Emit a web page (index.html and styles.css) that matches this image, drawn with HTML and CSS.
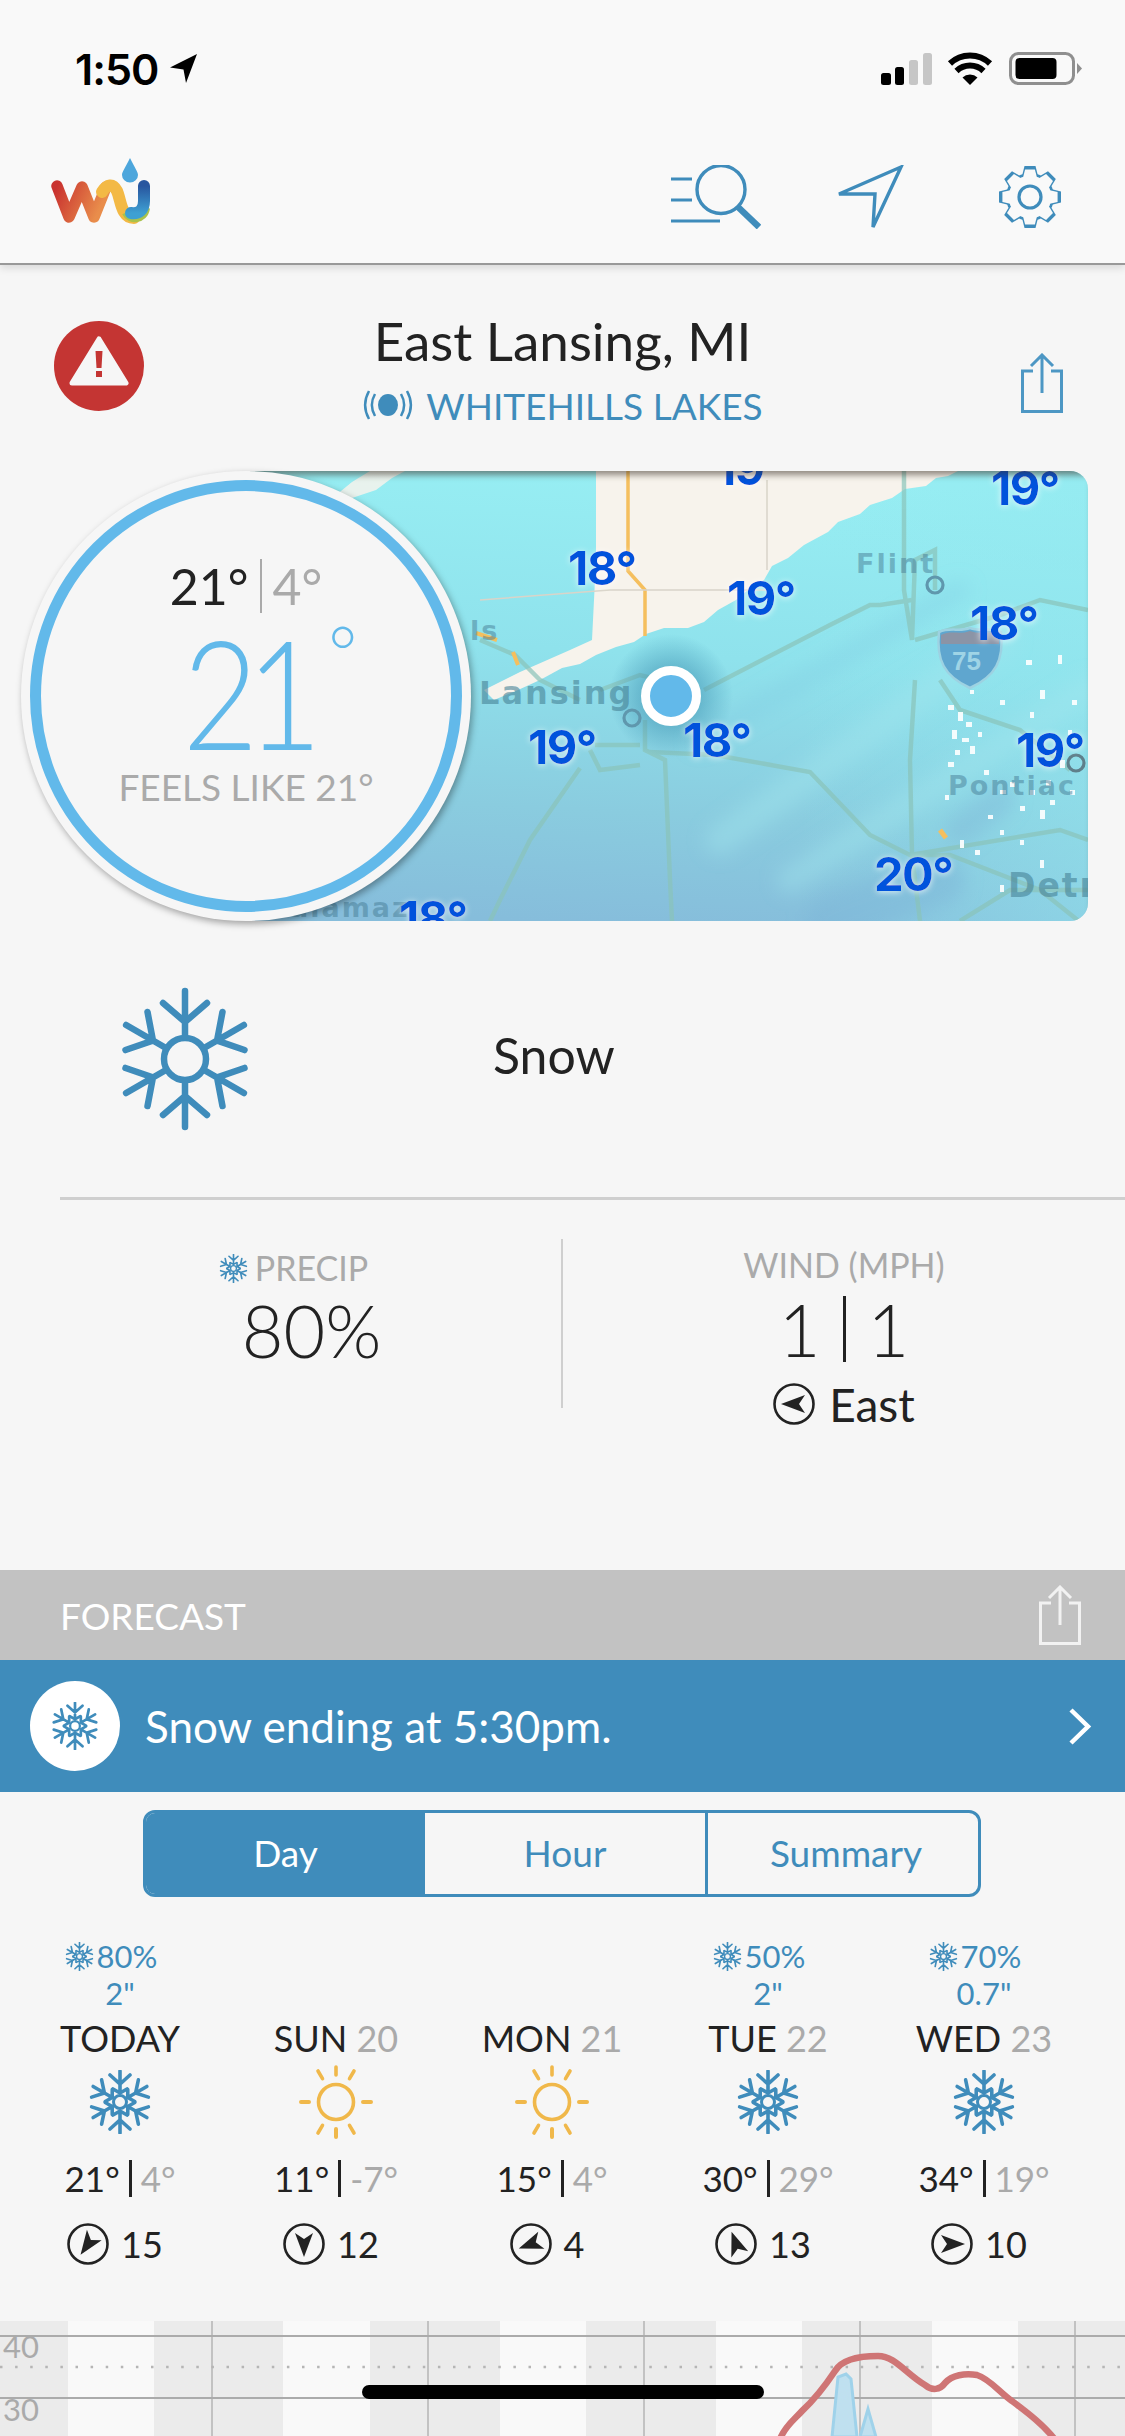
FILE: index.html
```html
<!DOCTYPE html>
<html lang="en">
<head>
<meta charset="utf-8">
<title>Weather Underground</title>
<link rel="stylesheet" href="styles.css">
</head>
<body>
<svg class="defs" width="0" height="0" aria-hidden="true">
  <defs>
    <g id="arm"><path d="M0 -9V-31M-10 -27L0 -18L10 -27M-7 -13L0 -9L7 -13" fill="none" stroke-linecap="round"/></g>
    <symbol id="flake" viewBox="-32 -32 64 64">
      <g stroke="currentColor" stroke-width="3.6" fill="none">
        <circle r="6.5" stroke-width="3"/>
        <use href="#arm"/><use href="#arm" transform="rotate(60)"/><use href="#arm" transform="rotate(120)"/>
        <use href="#arm" transform="rotate(180)"/><use href="#arm" transform="rotate(240)"/><use href="#arm" transform="rotate(300)"/>
      </g>
    </symbol>
    <symbol id="sun" viewBox="-38 -38 76 76">
      <g fill="none" stroke="#f0b84a" stroke-width="3.6" stroke-linecap="round">
        <circle r="17.5"/>
        <path id="ray" d="M0 -27V-35"/>
        <path d="M0 27V35M27 0H35M-27 0H-35" stroke-width="4"/>
        <path d="M13.5 -23.4L18 -31M-13.5 -23.4L-18 -31M13.5 23.4L18 31M-13.5 23.4L-18 31"/>
      </g>
    </symbol>
    <symbol id="wind" viewBox="-21 -21 42 42">
      <circle r="19.5" fill="none" stroke="#222" stroke-width="2.6"/>
    </symbol>
    <path id="kite" d="M13 0L-11 -9L-5 0L-11 9Z" fill="#222"/>
    <g id="tooth"><path d="M-8 -21L-5.5 -31H5.5L8 -21Z"/></g>
    <g id="gearshape">
      <circle r="24"/>
      <use href="#tooth"/><use href="#tooth" transform="rotate(45)"/><use href="#tooth" transform="rotate(90)"/><use href="#tooth" transform="rotate(135)"/>
      <use href="#tooth" transform="rotate(180)"/><use href="#tooth" transform="rotate(225)"/><use href="#tooth" transform="rotate(270)"/><use href="#tooth" transform="rotate(315)"/>
    </g>
    <linearGradient id="wGrad" x1="0" x2="1" y1="0" y2="0.3"><stop offset="0" stop-color="#c9322f"/><stop offset="1" stop-color="#e98d4b"/></linearGradient>
    <linearGradient id="uGrad" x1="0" x2="0" y1="0" y2="1"><stop offset="0" stop-color="#28569f"/><stop offset="1" stop-color="#3ea0d3"/></linearGradient>
    <linearGradient id="snowGrad" x1="0.45" y1="0" x2="0.35" y2="1">
      <stop offset="0" stop-color="#97eef3"/><stop offset="0.4" stop-color="#8fe2ec"/><stop offset="0.75" stop-color="#8accdf"/><stop offset="1" stop-color="#86bddb"/>
    </linearGradient>
    <linearGradient id="rightGlow" x1="0" x2="1" y1="0" y2="0"><stop offset="0.45" stop-color="#93e8ef" stop-opacity="0"/><stop offset="1" stop-color="#93e8ef" stop-opacity="0.85"/></linearGradient>
    <radialGradient id="pinGlow"><stop offset="0.5" stop-color="#3b8fb0" stop-opacity="0.45"/><stop offset="1" stop-color="#3b8fb0" stop-opacity="0"/></radialGradient>
    <filter id="glow" x="-20%" y="-20%" width="140%" height="140%"><feDropShadow dx="0" dy="1" stdDeviation="3" flood-color="#ffffff" flood-opacity="0.75"/></filter>
    <filter id="soft"><feGaussianBlur stdDeviation="9"/></filter>
    <filter id="shade" x="-20%" y="-20%" width="140%" height="140%"><feDropShadow dx="2" dy="2" stdDeviation="2" flood-color="#000" flood-opacity="0.25"/></filter>
  </defs>
</svg>

<header class="topbar">
  <div class="status">
    <div class="status-time"><span>1:50</span>
      <svg class="status-loc" viewBox="0 0 27 29"><path d="M27 0L16 29L13.5 15.5L0 13.5Z" fill="#000"/></svg>
    </div>
    <div class="status-right">
      <svg class="signal" viewBox="0 0 51 32"><rect x="0" y="20" width="10" height="12" rx="2.5" fill="#000"/><rect x="14" y="14" width="9" height="18" rx="2.5" fill="#000"/><rect x="28" y="7" width="9" height="25" rx="2.5" fill="#c6c6c6"/><rect x="42" y="0" width="9" height="32" rx="2.5" fill="#c6c6c6"/></svg>
      <svg class="wifi" viewBox="0 0 46 33"><path d="M23 33L15.5 25.5A11 11 0 0 1 30.5 25.5Z" fill="#000"/><path d="M9.5 19A19.5 19.5 0 0 1 36.5 19M3 11.5A29 29 0 0 1 43 11.5" fill="none" stroke="#000" stroke-width="6"/></svg>
      <svg class="battery" viewBox="0 0 73 33"><rect x="1.5" y="1.5" width="63" height="30" rx="8" fill="none" stroke="#8f8f8f" stroke-width="3"/><rect x="6.5" y="6" width="41" height="21" rx="4" fill="#000"/><path d="M68 11L73 16.5L68 22Z" fill="#8f8f8f"/></svg>
    </div>
  </div>
  <nav class="appbar">
    <svg class="logo" viewBox="0 0 99 66">
      <path d="M6 28L18 59L31 29L43 59L55 29" fill="none" stroke="url(#wGrad)" stroke-width="11.5" stroke-linecap="round" stroke-linejoin="round"/>
      <path d="M51 34C56 26 62 25 66 33C70 42 70 60 83 60" fill="none" stroke="#f3b945" stroke-width="12" stroke-linecap="round"/>
      <path d="M74 55C78 64 94 64 96 50" fill="none" stroke="#a9c24c" stroke-width="6"/>
      <path d="M93 28V43C93 52 88 56 80 55" fill="none" stroke="url(#uGrad)" stroke-width="12" stroke-linecap="round"/>
      <path d="M79 0C74 10 71 14 71 17A8 7.5 0 0 0 87 17C87 14 84 10 79 0Z" fill="#4da6dc"/>
    </svg>
    <div class="appbar-icons">
      <svg class="ic-search" viewBox="0 0 90 64"><circle cx="50" cy="24.500" r="24" fill="none" stroke="#3f8cbb" stroke-width="3.4"/><path d="M67 42L88 62" stroke="#3f8cbb" stroke-width="6.500"/><path d="M0 14H21M0 35H21M0 56H49" stroke="#3f8cbb" stroke-width="3.200"/></svg>
      <svg class="ic-nav" viewBox="0 0 68 66"><path d="M65 2L3 29L39 29L37 62Z" fill="none" stroke="#3f8cbb" stroke-width="3.400" stroke-linejoin="miter"/></svg>
      <svg class="ic-gear" viewBox="-34 -34 68 68">
        <use href="#gearshape" fill="#3f8cbb" stroke="#3f8cbb" stroke-width="0"/>
        <use href="#gearshape" fill="#f9f9f9" transform="scale(.89)"/>
        <circle r="11" fill="none" stroke="#3f8cbb" stroke-width="3.200"/>
      </svg>
    </div>
  </nav>
</header>

<main>
  <section class="location">
    <svg class="alert" viewBox="0 0 90 90"><circle cx="45" cy="45" r="45" fill="#c43533"/><path d="M45 18L72 62H18Z" fill="#f6f6f6" stroke="#f6f6f6" stroke-width="5" stroke-linejoin="round"/><path d="M41.500 30H48.500L47.500 47H42.500ZM42 50H48V56H42Z" fill="#c43533"/></svg>
    <div class="place">
      <h1 class="place-name">East Lansing, MI</h1>
      <div class="place-station">
        <svg class="station-icon" viewBox="0 0 52 30"><ellipse cx="26" cy="15" rx="10" ry="11" fill="#3f8cbb"/><path d="M13 4C9 11 9 19 13 26M7 1C2 10 2 20 7 29M39 4C43 11 43 19 39 26M45 1C50 10 50 20 45 29" fill="none" stroke="#3f8cbb" stroke-width="2.500"/></svg>
        <span>WHITEHILLS LAKES</span>
      </div>
    </div>
    <svg class="share" viewBox="0 0 42 60"><path d="M12 18H1.500V58.500H40.500V18H30M21 40V2M10 13L21 2L32 13" fill="none" stroke="#4d97c4" stroke-width="3"/></svg>
  </section>

  <section class="hero">
    <div class="map">
      <svg class="map-svg" viewBox="250 471 838 450">
        <rect x="250" y="471" width="838" height="450" fill="url(#snowGrad)"/>
        <rect x="560" y="471" width="528" height="450" fill="url(#rightGlow)" opacity=".55"/>
        <g filter="url(#soft)" fill="none" stroke-linecap="round">
          <path d="M720 840L1000 640" stroke="#a2e6ee" stroke-width="30" opacity=".4"/>
          <path d="M790 880L1088 690" stroke="#a2e6ee" stroke-width="26" opacity=".4"/>
          <path d="M700 740L960 590" stroke="#7fcbe0" stroke-width="20" opacity=".3"/>
          <path d="M830 920L940 880" stroke="#7db4d6" stroke-width="50" opacity=".45"/>
          <path d="M960 830L1000 800" stroke="#7db4d6" stroke-width="30" opacity=".4"/>
        </g>
        <path d="M596 471L958 471L948 476L936 478L926 486L905 489L892 498L870 505L860 514L838 522L828 532L804 545L788 558L772 566L764 580L748 590L736 600L718 610L704 622L688 628L664 628L646 634L634 642L616 647L596 655L580 664L562 668L540 680L518 690L494 700L484 690L520 672L570 650L592 640L596 560Z" fill="#f7f3ec"/>
        <path d="M370 471H405L392 478L376 490L352 498L330 509L318 518L330 500L352 482Z" fill="#f7f3ec" opacity=".85"/>
        <g fill="none" stroke="#f5bf5e" stroke-width="3.500">
          <path d="M628 471V571L645 590V636"/>
        </g>
        <g fill="none" stroke="#d9d4c9" stroke-width="1.500">
          <path d="M480 600L610 590H766M767 480V570"/>
        </g>
        <g fill="none" stroke="#8ac4ba" stroke-width="4.500" opacity=".7">
          <path d="M904 471V590L912 640L915 560L935 550V590M915 640L1000 615L1040 600L1088 610"/>
          <path d="M704 690L830 625L870 605H880L912 600"/>
          <path d="M600 690L640 675L660 680M645 720V750L665 760L670 880L672 921"/>
          <path d="M650 752L715 755L810 772L870 835L910 855H950L1040 890L1090 930"/>
          <path d="M595 745H640M590 750L600 770L640 765M580 768L530 840L500 900L490 921M915 680L910 760L912 855L920 921"/>
          <path d="M910 855L1060 830L1088 840M960 921L1010 890H1088"/>
          <path d="M480 640L515 655L540 680L580 700M940 680L960 710L1020 730L1070 770"/>
        </g>
        <path d="M476 633L497 640M513 652L518 665" stroke="#f5bf5e" stroke-width="4" fill="none"/>
        <path d="M940 830l6 8" stroke="#f5bf5e" stroke-width="5"/>
        <g fill="#fff" opacity=".9">
          <path d="M948 705h6v5h-6zM958 712h5v9h-5zM966 722h6v5h-6zM952 730h5v9h-5zM962 738h7v4h-7zM970 746h5v8h-5zM955 750h5v5h-5zM948 762h6v5h-6zM1000 700h5v5h-5zM1026 660h6v5h-6zM1040 690h5v9h-5zM1058 655h4v9h-4zM1072 700h5v5h-5zM1030 712h4v6h-4zM984 770h5v5h-5zM1000 790h6v4h-6zM1010 782h5v5h-5zM1030 790h5v5h-5zM1046 780h5v6h-5zM1060 760h5v8h-5zM1050 800h5v5h-5zM1070 790h5v5h-5zM1020 806h5v5h-5zM1040 810h5v9h-5zM1000 830h4v5h-4zM960 840h4v8h-4zM975 850h5v5h-5zM1020 840h4v5h-4zM1040 860h4v8h-4zM1000 885h4v7h-4zM988 815h5v4h-5zM945 795h4v5h-4zM970 690h4v4h-4zM1068 730h4v5h-4zM978 732h4v5h-4z"/>
        </g>
        <circle cx="671" cy="696" r="62" fill="url(#pinGlow)"/>
        <g class="map-cities">
          <text x="470" y="640">ls</text>
          <text x="479" y="704" class="c-lansing">Lansing</text>
          <text x="856" y="573">Flint</text>
          <text x="948" y="795">Pontiac</text>
          <text x="1008" y="897" class="c-detroit">Detr</text>
          <text x="290" y="917">alamaz</text>
        </g>
        <g fill="none" stroke="#5f97ad" stroke-width="3.200">
          <circle cx="935" cy="585" r="8"/><circle cx="632" cy="718" r="8"/>
          <circle cx="1076" cy="763" r="8" stroke="#5f7f8a"/>
        </g>
        <g>
          <path d="M939 632C950 627 960 632 970 628C980 632 992 627 1001 632C1004 660 996 676 970 688C944 676 936 660 939 632Z" fill="#5fa6cf" stroke="#9dd2e2" stroke-width="2.500"/>
          <path d="M941 635C950 630 960 635 970 631C980 635 992 630 999 635V644H941Z" fill="#8b94a6"/>
          <text x="952" y="670" class="shield">75</text>
        </g>
        <g class="map-temps" filter="url(#glow)">
          <text x="716" y="485">19°</text>
          <text x="991" y="505">19°</text>
          <text x="568" y="585">18°</text>
          <text x="727" y="615">19°</text>
          <text x="970" y="640">18°</text>
          <text x="528" y="764">19°</text>
          <text x="683" y="757">18°</text>
          <text x="1016" y="767">19°</text>
          <text x="874" y="891">20°</text>
          <text x="399" y="935">18°</text>
        </g>
      </svg>
      <span class="pin"></span>
    </div>
    <div class="dial">
      <div class="dial-ring">
        <div class="dial-hilo"><span class="dark">21°</span><i class="dial-bar"></i><span class="grey">4°</span></div>
        <div class="dial-now"><span class="dial-num">21</span><span class="dial-deg">°</span></div>
        <div class="dial-feels">FEELS LIKE 21°</div>
      </div>
    </div>
  </section>

  <section class="condition">
    <svg class="condition-icon" viewBox="-72 -72 144 144">
      <g fill="none" stroke="#3f8cbb" stroke-width="6.500" stroke-linecap="round">
        <circle r="21"/>
        <g id="bigarm"><path d="M0 -22V-68M-22 -56L0 -37L22 -56"/></g>
        <use href="#bigarm" transform="rotate(60)"/><use href="#bigarm" transform="rotate(120)"/><use href="#bigarm" transform="rotate(180)"/><use href="#bigarm" transform="rotate(240)"/><use href="#bigarm" transform="rotate(300)"/>
      </g>
    </svg>
    <span class="condition-text">Snow</span>
  </section>

  <div class="rule"></div>

  <section class="stats">
    <div class="stat stat-left">
      <div class="stat-label stat-precip"><svg class="flake-sm"><use href="#flake"/></svg><span>PRECIP</span></div>
      <div class="stat-value">80%</div>
    </div>
    <div class="stat-rule"></div>
    <div class="stat stat-right">
      <div class="stat-label">WIND (MPH)</div>
      <div class="stat-value stat-wind"><span>1</span><i class="wind-bar"></i><span>1</span></div>
      <div class="stat-dir">
        <svg class="wind-ic" viewBox="-21 -21 42 42"><use href="#wind" width="42" height="42" x="-21" y="-21"/><use href="#kite" transform="rotate(180)"/></svg>
        <span>East</span>
      </div>
    </div>
  </section>

  <section class="band">
    <span>FORECAST</span>
    <svg class="band-share" viewBox="0 0 42 60"><path d="M12 18H1.500V58.500H40.500V18H30M21 40V2M10 13L21 2L32 13" fill="none" stroke="#f2f2f2" stroke-width="3"/></svg>
  </section>

  <section class="banner">
    <span class="banner-badge"><svg class="banner-flake"><use href="#flake"/></svg></span>
    <span class="banner-text">Snow ending at 5:30pm.</span>
    <svg class="banner-chev" viewBox="0 0 24 37"><path d="M3 2L20 18.500L3 35" fill="none" stroke="#fff" stroke-width="4.500"/></svg>
  </section>

  <div class="segments">
    <span class="seg seg-on">Day</span>
    <span class="seg">Hour</span>
    <span class="seg">Summary</span>
  </div>

  <section class="days">
    <article class="day">
      <div class="day-precip"><div class="day-chance"><svg class="flake-xs"><use href="#flake"/></svg>80%</div><div class="day-amt">2"</div></div>
      <div class="day-name">TODAY</div>
      <div class="day-icon"><svg class="flake-md"><use href="#flake"/></svg></div>
      <div class="day-temps"><span>21°</span><i></i><span class="grey">4°</span></div>
      <div class="day-wind"><svg class="wind-ic" viewBox="-21 -21 42 42"><use href="#wind" width="42" height="42" x="-21" y="-21"/><use href="#kite" transform="rotate(125)"/></svg><span>15</span></div>
    </article>
    <article class="day">
      <div class="day-precip"></div>
      <div class="day-name">SUN <span class="grey">20</span></div>
      <div class="day-icon"><svg class="sun-ic"><use href="#sun"/></svg></div>
      <div class="day-temps"><span>11°</span><i></i><span class="grey">-7°</span></div>
      <div class="day-wind"><svg class="wind-ic" viewBox="-21 -21 42 42"><use href="#wind" width="42" height="42" x="-21" y="-21"/><use href="#kite" transform="rotate(90)"/></svg><span>12</span></div>
    </article>
    <article class="day">
      <div class="day-precip"></div>
      <div class="day-name">MON <span class="grey">21</span></div>
      <div class="day-icon"><svg class="sun-ic"><use href="#sun"/></svg></div>
      <div class="day-temps"><span>15°</span><i></i><span class="grey">4°</span></div>
      <div class="day-wind"><svg class="wind-ic" viewBox="-21 -21 42 42"><use href="#wind" width="42" height="42" x="-21" y="-21"/><use href="#kite" transform="rotate(160)"/></svg><span>4</span></div>
    </article>
    <article class="day">
      <div class="day-precip"><div class="day-chance"><svg class="flake-xs"><use href="#flake"/></svg>50%</div><div class="day-amt">2"</div></div>
      <div class="day-name">TUE <span class="grey">22</span></div>
      <div class="day-icon"><svg class="flake-md"><use href="#flake"/></svg></div>
      <div class="day-temps"><span>30°</span><i></i><span class="grey">29°</span></div>
      <div class="day-wind"><svg class="wind-ic" viewBox="-21 -21 42 42"><use href="#wind" width="42" height="42" x="-21" y="-21"/><use href="#kite" transform="rotate(-110)"/></svg><span>13</span></div>
    </article>
    <article class="day">
      <div class="day-precip"><div class="day-chance"><svg class="flake-xs"><use href="#flake"/></svg>70%</div><div class="day-amt">0.7"</div></div>
      <div class="day-name">WED <span class="grey">23</span></div>
      <div class="day-icon"><svg class="flake-md"><use href="#flake"/></svg></div>
      <div class="day-temps"><span>34°</span><i></i><span class="grey">19°</span></div>
      <div class="day-wind"><svg class="wind-ic" viewBox="-21 -21 42 42"><use href="#wind" width="42" height="42" x="-21" y="-21"/><use href="#kite"/></svg><span>10</span></div>
    </article>
  </section>

  <section class="chart">
    <svg viewBox="0 2320 1125 116" width="1125" height="116">
      <rect x="0" y="2320" width="1125" height="116" fill="#f9f9f9"/>
      <g fill="#ebebeb">
        <rect x="0" y="2320" width="68" height="116"/><rect x="154" y="2320" width="129" height="116"/><rect x="370" y="2320" width="130" height="116"/>
        <rect x="586" y="2320" width="130" height="116"/><rect x="802" y="2320" width="130" height="116"/><rect x="1018" y="2320" width="107" height="116"/>
      </g>
      <path d="M212 2320V2436M428 2320V2436M644 2320V2436M860 2320V2436M1075 2320V2436" stroke="#b5b5b5" stroke-width="1.500"/>
      <path d="M0 2335H1125M0 2397H1125" stroke="#ababab" stroke-width="2"/>
      <path d="M0 2366H1125" stroke="#b5b5b5" stroke-width="2.500" stroke-dasharray="2.500 12.600"/>
      <g class="chart-axis"><text x="3" y="2357">40</text><text x="3" y="2420">30</text></g>
      <path d="M832 2436L838 2376L846 2373L851 2378L857 2436Z" fill="#bfe0ef" stroke="#9fd2ea" stroke-width="3"/>
      <path d="M860 2436L868 2408L876 2436Z" fill="#bfe0ef" stroke="#9fd2ea" stroke-width="3"/>
      <path d="M780 2438C785 2425 795 2418 802 2410C815 2398 825 2385 835 2370C842 2358 860 2355 878 2355C895 2355 905 2372 925 2384C932 2390 940 2389 945 2382C952 2374 965 2372 977 2374C990 2378 1000 2392 1012 2400C1028 2412 1045 2425 1056 2440" fill="none" stroke="#cf7575" stroke-width="6.500"/>
    </svg>
  </section>
</main>
<div class="home"></div>
</body>
</html>
```

FILE: styles.css
```css
* { box-sizing: border-box; }
html, body { margin: 0; padding: 0; }
body {
  position: relative;
  width: 1125px;
  height: 2436px;
  overflow: hidden;
  background: #f6f6f6;
  color: #222;
  font-family: "Lato", "Liberation Sans", sans-serif;
  font-weight: 400;
}
.defs { position: absolute; }
.grey { color: #aaa; }
.dark { color: #222; }

/* top */
.topbar {
  position: relative;
  z-index: 3;
  height: 265px;
  background: #f9f9f9;
  border-bottom: 2px solid #999;
  box-shadow: 0 3px 8px rgba(0, 0, 0, .12);
}
.status { height: 132px; display: flex; justify-content: space-between; padding: 52px 43px 0 75px; }
.status-time { display: flex; gap: 12px; height: 33px; align-items: center; font-family: "Inter", sans-serif; font-weight: 600; font-size: 43px; letter-spacing: -1px; color: #000; }
.status-loc { width: 27px; height: 29px; }
.status-right { display: flex; height: 33px; align-items: center; }
.signal { width: 51px; height: 32px; }
.wifi { width: 46px; height: 33px; margin-left: 15px; }
.battery { width: 73px; height: 33px; margin-left: 16px; }
.appbar { display: flex; justify-content: space-between; padding: 26px 61px 0 51px; height: 130px; }
.logo { width: 99px; height: 66px; }
.appbar-icons { display: flex; align-items: flex-start; padding-top: 7px; }
.ic-search { width: 90px; height: 64px; margin-right: 75px; }
.ic-nav { width: 68px; height: 66px; margin-right: 92px; }
.ic-gear { width: 68px; height: 68px; margin-top: -2px; }

/* location */
.location {
  height: 206px;
  display: grid;
  grid-template-columns: 1fr auto 1fr;
  align-items: start;
  padding-top: 46px;
}
.alert { width: 90px; height: 90px; margin: 10px 0 0 54px; }
.place { text-align: center; }
.place-name { margin: 0; font-size: 53px; line-height: 60px; font-weight: 400; color: #222; }
.place-station { display: flex; justify-content: center; align-items: center; gap: 12px; margin-top: 12px; height: 44px; color: #3f8cbb; font-size: 37px; }
.station-icon { width: 52px; height: 30px; }
.share { width: 42px; height: 60px; justify-self: end; margin: 42px 62px 0 0; }

/* hero */
.hero { position: relative; height: 450px; }
.map {
  position: relative;
  margin-left: 250px;
  width: 838px;
  height: 450px;
  border-radius: 0 18px 18px 0;
  overflow: hidden;
}
.map::after {
  content: "";
  position: absolute;
  inset: 0;
  box-shadow: inset 0 8px 6px -4px rgba(60, 50, 40, .55);
}
.map-svg { display: block; width: 838px; height: 450px; }
.map-temps text { font-family: "Inter", sans-serif; font-weight: 700; font-size: 47px; letter-spacing: -1.500px; fill: #0052dc; }
.map-cities text { font-family: "DejaVu Sans", sans-serif; font-weight: 700; font-size: 27px; letter-spacing: 2px; fill: rgba(70, 125, 150, .5); }
.map-cities .c-lansing { font-size: 32px; fill: rgba(70, 130, 150, .6); }
.map-cities .c-detroit { font-size: 33px; fill: rgba(70, 130, 150, .6); }
.shield { font-family: "Liberation Sans", sans-serif; font-size: 26px; font-weight: 700; fill: #9fd4e6; }
.pin {
  position: absolute;
  left: 391px;
  top: 195px;
  width: 60px;
  height: 60px;
  border-radius: 50%;
  background: #62b9ea;
  border: 9px solid #fff;
}
.dial {
  position: absolute;
  left: 21px;
  top: 0;
  width: 450px;
  height: 450px;
  padding: 9px;
  border-radius: 50%;
  background: #f6f6f6;
  box-shadow: 2px 3px 7px rgba(0, 0, 0, .35);
}
.dial-ring {
  width: 432px;
  height: 432px;
  border-radius: 50%;
  border: 11px solid #62b9ea;
  display: flex;
  flex-direction: column;
  align-items: center;
  padding-top: 70px;
}
.dial-hilo { display: flex; align-items: center; gap: 11px; height: 50px; font-size: 50px; line-height: 50px; }
.dial-bar { display: block; width: 2px; height: 54px; background: #aaa; }
.dial-now { position: relative; margin-top: 15px; height: 130px; line-height: 130px; color: #62b9ea; font-size: 152px; font-weight: 300; }
.dial-num { display: inline-block; letter-spacing: -14px; transform: scaleX(.86); transform-origin: center; }
.dial-deg { position: absolute; left: 100%; top: -10px; margin-left: 8px; font-size: 70px; line-height: 70px; }
.dial-feels { margin-top: 11px; height: 40px; line-height: 40px; color: #aaa; font-size: 37px; }

/* condition */
.condition { display: flex; align-items: center; height: 276px; padding-left: 113px; }
.condition-icon { width: 144px; height: 144px; }
.condition-text { margin-left: 236px; font-size: 50px; line-height: 60px; margin-top: -8px; }
.rule { height: 3px; margin-left: 60px; background: #cfcfcf; }

/* stats */
.stats { display: flex; align-items: flex-start; height: 370px; }
.stat { display: flex; flex-direction: column; align-items: center; }
.stat-left { width: 561px; padding: 48px 0 0 62px; }
.stat-right { width: 562px; padding-top: 45px; }
.stat-rule { width: 2px; height: 169px; margin-top: 39px; background: #cfcfcf; }
.stat-label { display: flex; align-items: center; gap: 7px; height: 40px; line-height: 40px; font-size: 34px; color: #aaa; }
.stat-precip { margin-right: 36px; }
.flake-sm { width: 29px; height: 29px; color: #3f8cbb; }
.stat-value { height: 80px; line-height: 80px; margin-top: 2px; font-size: 72px; font-weight: 300; color: #222; }
.stat-wind { display: flex; align-items: center; gap: 22px; margin-top: 4px; }
.wind-bar { display: block; width: 3px; height: 66px; background: #222; }
.stat-dir { display: flex; align-items: center; gap: 14px; height: 50px; margin-top: 10px; font-size: 46px; color: #222; }
.wind-ic { width: 42px; height: 42px; flex: none; }

/* forecast band */
.band { display: flex; justify-content: space-between; align-items: center; height: 90px; padding: 0 44px 0 60px; background: #c2c2c2; color: #fff; font-size: 37px; }
.band-share { width: 42px; height: 60px; }
.banner { display: flex; align-items: center; height: 132px; padding: 0 33px 0 30px; background: #3f8cbb; color: #fff; }
.banner-badge { display: flex; align-items: center; justify-content: center; width: 90px; height: 90px; border-radius: 50%; background: #fff; }
.banner-flake { width: 48px; height: 48px; color: #3f8cbb; }
.banner-text { margin-left: 25px; font-size: 44px; }
.banner-chev { width: 24px; height: 37px; margin-left: auto; }
.segments { display: grid; grid-template-columns: 279px 280px 279px; width: 838px; height: 87px; margin: 18px 0 0 143px; border: 3px solid #3f8cbb; border-radius: 12px; overflow: hidden; }
.seg { display: flex; align-items: center; justify-content: center; padding-bottom: 2px; color: #3f8cbb; font-size: 37px; }
.seg + .seg { border-left: 3px solid #3f8cbb; }
.seg-on { background: #3f8cbb; color: #fff; }
.seg-on + .seg { border-left: 0; }

/* days */
.days { display: grid; grid-template-columns: repeat(5, 216px); margin: 39px 0 0 12px; }
.day { display: flex; flex-direction: column; align-items: center; }
.day-precip { height: 75px; color: #3f8cbb; text-align: center; }
.day-chance { display: flex; align-items: center; justify-content: center; gap: 3px; height: 40px; font-size: 31px; margin-left: -18px; }
.flake-xs { width: 29px; height: 29px; }
.day-amt { height: 35px; line-height: 35px; font-size: 31px; }
.day-name { height: 40px; line-height: 40px; margin-top: 7px; font-size: 36px; white-space: nowrap; }
.day-icon { display: flex; align-items: center; justify-content: center; height: 72px; margin-top: 8px; }
.flake-md { width: 64px; height: 64px; color: #3f8cbb; }
.sun-ic { width: 76px; height: 76px; }
.day-temps { display: flex; align-items: center; gap: 9px; height: 50px; margin-top: 15px; font-size: 35px; white-space: nowrap; }
.day-temps i { display: block; width: 3px; height: 37px; background: #222; }
.day-wind { display: flex; align-items: center; gap: 12px; height: 42px; margin: 20px 10px 0 0; font-size: 36px; }

/* chart */
.chart { margin-top: 56px; height: 116px; }
.chart svg { display: block; }
.chart-axis text { font-size: 31px; fill: #aaa; }
.home { position: absolute; left: 362px; top: 2385px; width: 402px; height: 14px; border-radius: 7px; background: #000; }
```
